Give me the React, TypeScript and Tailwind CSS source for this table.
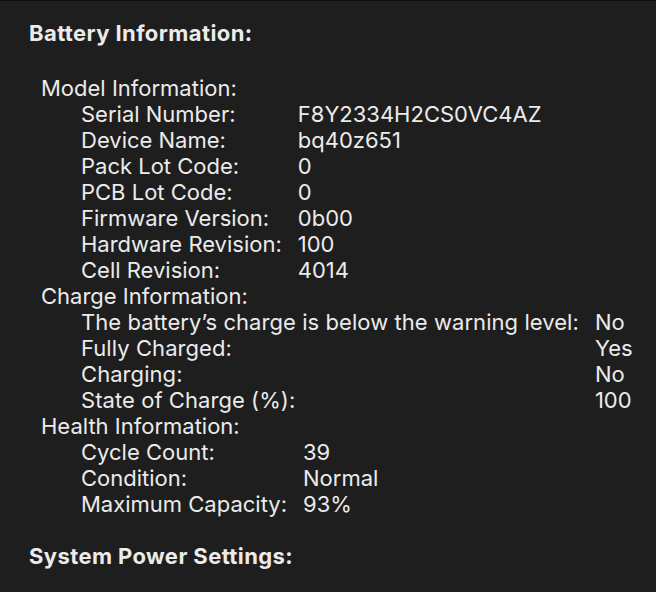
import React from "react";

type Row = [string, string];

const model: Row[] = [
  ["Serial Number:", "F8Y2334H2CS0VC4AZ"],
  ["Device Name:", "bq40z651"],
  ["Pack Lot Code:", "0"],
  ["PCB Lot Code:", "0"],
  ["Firmware Version:", "0b00"],
  ["Hardware Revision:", "100"],
  ["Cell Revision:", "4014"],
];

const charge: Row[] = [
  ["The battery\u2019s charge is below the warning level:", "No"],
  ["Fully Charged:", "Yes"],
  ["Charging:", "No"],
  ["State of Charge (%):", "100"],
];

const health: Row[] = [
  ["Cycle Count:", "39"],
  ["Condition:", "Normal"],
  ["Maximum Capacity:", "93%"],
];

function Section({ title, rows, labelClass = "" }: { title: string; rows: Row[]; labelClass?: string }) {
  return (
    <div>
      <div className="pl-[41px]">{title}</div>
      <div className="grid grid-cols-[auto_auto] justify-start gap-x-4 pl-[81px]">
        {rows.map(([k, v]) => (
          <React.Fragment key={k}>
            <div className={"whitespace-nowrap " + labelClass}>{k}</div>
            <div className="whitespace-nowrap">{v}</div>
          </React.Fragment>
        ))}
      </div>
    </div>
  );
}

export default function App() {
  return (
    <div
      className="w-[656px] h-[592px] bg-[#1e1e1e] border-t border-[#0e0e0e] text-[#ebebeb] text-[22px] leading-[26px] overflow-hidden"
      style={{ fontFamily: "Inter, 'Noto Sans', sans-serif" }}
    >
      <div className="pt-[19px] pl-[29px] font-bold tracking-[0.4px]">Battery Information:</div>
      <div className="mt-[29px]">
        <Section title="Model Information:" rows={model} />
        <Section title="Charge Information:" rows={charge} labelClass="tracking-[0.06px]" />
        <Section title="Health Information:" rows={health} />
      </div>
      <div className="mt-[26px] pl-[29px] font-bold tracking-[0.4px]">System Power Settings:</div>
    </div>
  );
}
